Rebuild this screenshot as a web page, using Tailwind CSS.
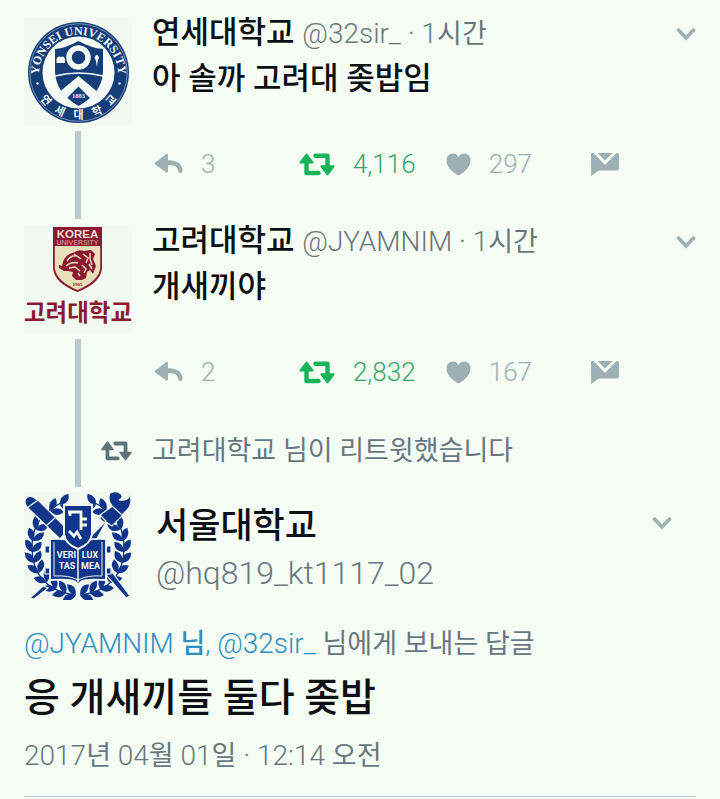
<!DOCTYPE html>
<html lang="ko">
<head>
<meta charset="utf-8">
<meta name="viewport" content="width=device-width, initial-scale=1">
<title>트윗</title>
<script src="https://cdn.jsdelivr.net/npm/@tailwindcss/browser@4"></script>
</head>
<body class="bg-[#f6fdf5] font-['Roboto','Noto_Sans_CJK_KR',sans-serif] text-[#0c1012]">
<svg class="hidden" aria-hidden="true">
  <symbol id="reply" viewBox="0 0 29 22"><path d="M1.3 9.500 12 1.200q2-1.200 2 .8V7.300C22 7 28.500 10.500 28.500 17.500Q28.500 20 26.300 20T24 17.500C23.500 13 19 11.900 14 12V18.500q0 2-2 .8L1.300 11.500Q.2 10.500 1.300 9.500Z" fill="currentColor"/></symbol>
  <symbol id="retweet" viewBox="0 0 36 23"><path d="M7.500 9V20H19.500M16.500 2.800H28.500V14" fill="none" stroke="currentColor" stroke-width="4.400" stroke-linejoin="round" stroke-linecap="round"/><path d="M7.500 1.500 13.700 9.500H1.300ZM28.500 21.300 22.300 13.300H34.700Z" fill="currentColor" stroke="currentColor" stroke-width="2" stroke-linejoin="round"/></symbol>
  <symbol id="heart" viewBox="0 0 25 23"><path d="M12.500 22.600C9 21 .5 15 .5 7.500.5 0 9.500-2 12.500 4 15.500-2 24.500 0 24.500 7.500 24.500 15 16 21 12.500 22.600Z" fill="currentColor"/></symbol>
  <symbol id="mail" viewBox="0 0 28 23"><path d="M0 0H2.500L14 12 25.500 0H26Q28 0 28 2V15.500Q28 17.500 26 17.500H8L0 23ZM6.500 0H21.500L14 7.500Z" fill="currentColor"/></symbol>
  <symbol id="chevron" viewBox="0 0 20 14"><path d="M1.500 2 10 11 18.500 2" fill="none" stroke="currentColor" stroke-width="3.600"/></symbol>
</svg>

<main class="px-6 pt-[11px]">
  <article class="flex gap-5">
    <div class="flex w-[108px] shrink-0 flex-col items-center gap-[6px] pt-[6px]">
      <svg class="h-[108px] w-[108px] shrink-0" viewBox="0 0 108 108" role="img" aria-label="연세대학교">
        <rect width="108" height="108" fill="#f3faf1"/>
        <circle cx="54.500" cy="55.500" r="50.500" fill="#153d78"/>
        <circle cx="54.500" cy="55.500" r="48.800" fill="none" stroke="#8fa6c4" stroke-width=".8"/>
        <circle cx="54.500" cy="55.500" r="36" fill="#f7fcf8"/>
        <path id="ya" d="M16.600 68.500A39.500 39.500 0 1 1 92.400 68.500" fill="none"/>
        <text font-family="Liberation Serif" font-weight="700" font-size="12" fill="#f4faf8"><textPath href="#ya" startOffset="50%" text-anchor="middle">YONSEI UNIVERSITY</textPath></text>
        <g font-family="Noto Sans CJK KR" font-weight="700" font-size="11" fill="#f4faf8" text-anchor="middle">
          <text transform="translate(22 83) rotate(48)" y="4">연</text><text transform="translate(36 94) rotate(24)" y="4">세</text><text transform="translate(54.500 98)" y="4">대</text><text transform="translate(73 94) rotate(-24)" y="4">학</text><text transform="translate(87 83) rotate(-48)" y="4">교</text>
        </g>
        <circle cx="13.500" cy="66.500" r="1.200" fill="#dce9ee"/><circle cx="95.500" cy="66.500" r="1.200" fill="#dce9ee"/>
        <path d="M31 32Q42 31 54.500 24Q67 31 79 32V55Q78 76 54.500 89Q32 76 31 55Z" fill="#153d78"/>
        <path d="M31 59Q54.500 53 79 59" fill="none" stroke="#f7fcf8" stroke-width="1.500"/>
        <path d="M54.500 59 76 77 68 83 54.500 69.500 41 83 33 77Z" fill="#f7fcf8"/>
        <circle cx="54.500" cy="40.500" r="9.500" fill="#153d78" stroke="#f7fcf8" stroke-width="5.500"/>
        <path d="M32.500 46V42Q34 38.500 36.800 40 39.500 38.500 41 42V46ZM70.500 40.500Q73 35 75 40.500L73.800 44 73 50 72 44Z" fill="#f7fcf8"/>
        <text x="54.500" y="80.500" font-family="Liberation Serif" font-weight="700" font-size="6.500" text-anchor="middle" fill="#e9f1f5">1883</text>
      </svg>
      <div class="w-[6px] flex-1 bg-[#b9c9ce]"></div>
    </div>
    <div class="min-w-0 flex-1 pb-[35px]">
      <header class="flex h-[45px] items-center justify-between">
        <h2 class="text-[31px] leading-[45px] font-medium whitespace-nowrap">연세대학교 <span class="text-[28px] font-light text-[#66777f]">@32sir_ · 1<span class="text-[27px] font-normal">시간</span></span></h2>
        <button type="button" aria-label="더보기" class="text-[#9db0b5]"><svg class="h-[14px] w-5"><use href="#chevron"/></svg></button>
      </header>
      <p class="text-[31px] leading-[45px] font-medium">아 솔까 고려대 좆밥임</p>
      <div class="mt-[43px] grid h-10 grid-cols-[27%_27%_26%_auto] items-center text-[26px] font-light text-[#9db0b5]">
        <button type="button" aria-label="답글 3" class="flex items-center gap-[18px] pl-[2px]"><svg class="h-[22px] w-[29px]"><use href="#reply"/></svg>3</button>
        <button type="button" aria-label="리트윗 4,116" class="flex items-center gap-[18px] text-[#19b35a]"><svg class="h-[23px] w-9"><use href="#retweet"/></svg><span class="text-[#33a868]">4,116</span></button>
        <button type="button" aria-label="마음에 들어요 297" class="flex items-center gap-[18px]"><svg class="h-[23px] w-[25px]"><use href="#heart"/></svg>297</button>
        <button type="button" aria-label="쪽지" class="flex items-center pl-1"><svg class="h-[23px] w-7"><use href="#mail"/></svg></button>
      </div>
    </div>
  </article>

  <article class="flex gap-5">
    <div class="flex w-[108px] shrink-0 flex-col items-center gap-[6px] pt-[6px]">
      <svg class="h-[108px] w-[108px] shrink-0" viewBox="0 0 108 108" role="img" aria-label="고려대학교">
        <rect width="108" height="108" fill="#f3faf1"/>
        <path d="M29 2H78V43Q77 58 53.500 67Q30 58 29 43Z" fill="#8b1a31"/>
        <path d="M30.800 21H76.200V43Q75 56 53.500 65Q32 56 30.800 43Z" fill="#e6dfb9"/>
        <text x="53.500" y="12.500" text-anchor="middle" font-family="Liberation Sans" font-weight="700" font-size="11.500" fill="#eedfd0">KOREA</text>
        <text x="53.500" y="19.600" text-anchor="middle" font-family="Liberation Sans" font-size="7" fill="#d9b0ae">UNIVERSITY</text>
        <path d="M38 41Q40 29 50 27.500Q55 24 60 26L67 25 71 29 69 34 72 41 69 49 66 45 63 47 62 53 58 55 52 55 48 51 49 47 44 46 40 46 35 43 35 40Z" fill="#8b1a31"/>
        <path d="M43 36Q47 30 53 31M42 41Q48 36 54 38M50 29 57 34M59 29 64 33 62 38M66 28 66 34 68 40M45 43 51 42 56 46M58 40 62 44 60 48M54 48 56 51M65 39 68 44" stroke="#e6dfb9" stroke-width="1.500" fill="none"/>
        <text x="53.500" y="60.500" text-anchor="middle" font-family="Liberation Serif" font-weight="700" font-size="5" fill="#8b1a31">1905</text>
        <text x="54" y="95.500" text-anchor="middle" font-family="Noto Sans CJK KR" font-weight="700" font-size="23.500" fill="#8b1a31">고려대학교</text>
      </svg>
      <div class="w-[6px] flex-1 bg-[#b9c9ce]"></div>
    </div>
    <div class="min-w-0 flex-1 pb-[35px]">
      <header class="flex h-[45px] items-center justify-between">
        <h2 class="text-[31px] leading-[45px] font-medium whitespace-nowrap">고려대학교 <span class="text-[28px] font-light text-[#66777f]">@JYAMNIM · 1<span class="text-[27px] font-normal">시간</span></span></h2>
        <button type="button" aria-label="더보기" class="text-[#9db0b5]"><svg class="h-[14px] w-5"><use href="#chevron"/></svg></button>
      </header>
      <p class="text-[31px] leading-[45px] font-medium">개새끼야</p>
      <div class="mt-[43px] grid h-10 grid-cols-[27%_27%_26%_auto] items-center text-[26px] font-light text-[#9db0b5]">
        <button type="button" aria-label="답글 2" class="flex items-center gap-[18px] pl-[2px]"><svg class="h-[22px] w-[29px]"><use href="#reply"/></svg>2</button>
        <button type="button" aria-label="리트윗 2,832" class="flex items-center gap-[18px] text-[#19b35a]"><svg class="h-[23px] w-9"><use href="#retweet"/></svg><span class="text-[#33a868]">2,832</span></button>
        <button type="button" aria-label="마음에 들어요 167" class="flex items-center gap-[18px]"><svg class="h-[23px] w-[25px]"><use href="#heart"/></svg>167</button>
        <button type="button" aria-label="쪽지" class="flex items-center pl-1"><svg class="h-[23px] w-7"><use href="#mail"/></svg></button>
      </div>
    </div>
  </article>

  <div class="flex gap-5">
    <div class="flex w-[108px] shrink-0 justify-between pl-[51px]">
      <div class="w-[6px] bg-[#b9c9ce]"></div>
      <svg class="mt-[14px] h-5 w-[31px] text-[#5f737b]"><use href="#retweet"/></svg>
    </div>
    <p class="pb-3 text-[27px] leading-[48px] text-[#66777f]">고려대학교 님이 리트윗했습니다</p>
  </div>

  <article>
    <div class="flex gap-6 pt-[5px]">
      <svg class="h-[108px] w-[108px] shrink-0" viewBox="0 0 108 108" role="img" aria-label="서울대학교">
        <defs>
          <path id="leaf" d="M0 0Q-2-7 5-10Q8-3 0 0Z"/>
          <g id="pair"><use href="#leaf" transform="rotate(-52) scale(1.250)"/><use href="#leaf" transform="rotate(18) scale(1.250)"/></g>
          <g id="wreath">
            <path d="M50 103Q8 96 8 55Q8 22 42 9" fill="none" stroke="#10358a" stroke-width="1.300"/>
            <use href="#pair" transform="translate(52 103) rotate(-84)"/><use href="#pair" transform="translate(42 101) rotate(-74)"/><use href="#pair" transform="translate(32 97) rotate(-62)"/><use href="#pair" transform="translate(23 90) rotate(-48)"/><use href="#pair" transform="translate(15 81) rotate(-32)"/><use href="#pair" transform="translate(10 71) rotate(-16)"/><use href="#pair" transform="translate(8 60) rotate(-2)"/><use href="#pair" transform="translate(9 49) rotate(8)"/><use href="#pair" transform="translate(12 38) rotate(22)"/><use href="#pair" transform="translate(18 28) rotate(36)"/><use href="#pair" transform="translate(26 19) rotate(48)"/><use href="#pair" transform="translate(36 13) rotate(62)"/>
          </g>
        </defs>
        <rect width="108" height="108" fill="#f3faf1"/>
        <g fill="#10358a"><use href="#wreath"/><use href="#wreath" transform="translate(108 0) scale(-1 1)"/></g>
        <g stroke="#f3faf1" stroke-width="1.200" fill="#10358a">
          <path d="M1 9Q2 3 9 5L15 9 44 38 36 47 5 17Q1 14 1 9ZM3 16 14 8M22 34 32 25"/>
          <path d="M65 46 82 29 76 23 90 13 99 23 88 34 82 30 70 52Z"/>
          <path d="M88 14Q83 8 86 1Q93-2 97 2Q100 6 95 8Q104 9 106 3Q109 13 102 19L98 23Z"/>
          <path d="M82 83 88 80 106 104 102 106ZM19 94 6 106 10 107 24 96Z"/>
          <path d="M21 54H27V61H21ZM21 76H27V82H21ZM81 54H87V61H81ZM81 76H87V82H81Z"/>
          <path d="M26 47Q42 46 54 50Q66 46 82 47V88Q66 87 58 89L54 92 50 89Q42 87 26 88Z" stroke-width="1.800"/>
          <path d="M30 50V84Q45 83 54 88Q63 83 78 84V50" fill="none" stroke-width="1"/>
          <path d="M54 50V90" stroke-width="1.500"/>
          <path d="M40 13H68V42Q67 52 54 57Q41 52 40 42Z" stroke-width="2"/>
        </g>
        <path d="M44 20H57V38M46 20V24M57 27H63M57 33H63M45 39 50 44 53 40 57 47" fill="none" stroke="#f3faf1" stroke-width="2.800"/>
        <g font-family="Roboto" font-weight="700" font-size="9" fill="#f3faf1" text-anchor="middle"><text x="42.500" y="66">VERI</text><text x="43" y="77">TAS</text><text x="66" y="66">LUX</text><text x="66.500" y="77">MEA</text></g>
      </svg>
      <div class="flex min-w-0 flex-1 items-start justify-between pt-3 pr-6">
        <div>
          <h2 class="text-[35px] leading-[46px] font-medium">서울대학교</h2>
          <p class="text-[32px] leading-[46px] font-light text-[#66777f]">@hq819_kt1117_02</p>
        </div>
        <button type="button" aria-label="더보기" class="mt-3 text-[#9db0b5]"><svg class="h-[14px] w-5"><use href="#chevron"/></svg></button>
      </div>
    </div>
    <p class="mt-[22px] h-11 text-[27px] leading-[44px] whitespace-nowrap text-[#66777f]"><a href="#" class="text-[#2d8fc0]"><span class="text-[28px] font-light">@JYAMNIM</span> <span class="font-medium">님</span></a><span class="font-light text-[#2d8fc0]">, </span><a href="#" class="text-[28px] font-light text-[#2d8fc0]">@32sir_</a> 님에게 보내는 답글</p>
    <p class="text-[39px] leading-[64px] font-medium">응 개새끼들 둘다 좆밥</p>
    <p class="mt-1 h-11 text-[28px] leading-[44px] font-light text-[#66777f]">2017<span class="text-[27px] font-normal">년</span> 04<span class="text-[27px] font-normal">월</span> 01<span class="text-[27px] font-normal">일</span> · 12:14 <span class="text-[27px] font-normal">오전</span></p>
    <hr class="mt-[18px] border-[#b5d3cd]">
  </article>
</main>
</body>
</html>
